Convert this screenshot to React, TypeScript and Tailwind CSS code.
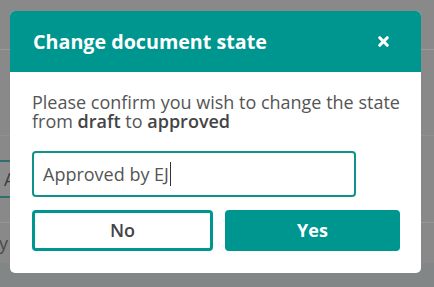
import { X } from "lucide-react";

const font = { fontFamily: '"Open Sans", "Noto Sans", sans-serif' };

function BackgroundPage() {
  // faint page behind the modal overlay
  return (
    <div className="flex h-full flex-col bg-[#898989]">
      <div className="h-[50px] border-b border-[#9a9a9a]" />
      <div className="h-[86px] border-b border-[#8f8f8f]" />
      <div className="flex h-[87px] flex-col justify-center border-b border-[#969696]">
        <div className="-ml-[30px] flex h-[38px] w-[200px] items-center rounded border-2 border-[#2f6f6c] bg-[#8c8c8c] pl-[32px] text-[18px] text-[#3d3d3d]">
          Approved by EJ
        </div>
      </div>
      <div className="flex h-[40px] items-center text-[18px] text-[#4a4a4a]">
        <span className="-ml-[12px]">by</span>
      </div>
      <div className="flex-1 bg-[#828686]" />
    </div>
  );
}

export default function App() {
  return (
    <div style={font} className="relative h-[287px] w-[434px] overflow-hidden">
      <BackgroundPage />

      <div className="absolute left-[10px] top-[11px] w-[411px] overflow-hidden rounded-[5px] bg-white">
        <div className="flex h-[61px] items-center justify-between bg-[#009690] pl-[23px] pr-[30px]">
          <h2 className="text-[19.7px] font-bold text-white">Change document state</h2>
          <X className="h-[15px] w-[15px] text-white" strokeWidth={5} />
        </div>

        <div className="px-[22px] pb-[22px] pt-[21px]">
          <p className="-mr-[18px] text-[18px] leading-[19px] text-[#555]">
            Please confirm you wish to change the state from{" "}
            <b className="font-semibold text-[#444]">draft</b> to{" "}
            <b className="font-semibold text-[#444]">approved</b>
          </p>

          <div className="mt-[20px] flex h-[46px] w-[324px] items-center rounded-[4px] border-2 border-[#0f918c] px-[9px] text-[18px] text-[#555]">
            Approved by EJ
            <span className="ml-[1px] inline-block h-[24px] w-px bg-[#333]" />
          </div>

          <div className="mt-[13px] grid grid-cols-[181px_175px] gap-[12px]">
            <button className="h-[41px] rounded-[4px] border-[3px] border-[#009690] bg-white text-[18px] font-semibold text-[#444]">
              No
            </button>
            <button className="h-[41px] rounded-[4px] bg-[#009690] text-[18px] font-bold text-white">
              Yes
            </button>
          </div>
        </div>
      </div>
    </div>
  );
}
